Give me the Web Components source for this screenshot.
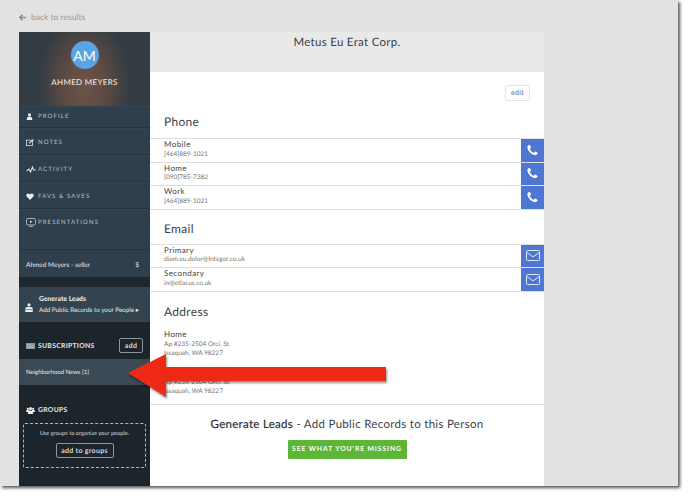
<!DOCTYPE html>
<html>
<head>
<meta charset="utf-8">
<title>Contact</title>
<style>
  html, body { margin: 0; padding: 0; background: #fff; }
  body { font-family: Lato, "Open Sans", sans-serif; text-rendering: geometricPrecision; width: 693px; height: 501px; overflow: hidden; }
</style>
</head>
<body>

<crm-page>
  <crm-sidebar slot="side"></crm-sidebar>
  <crm-main slot="main"></crm-main>
</crm-page>

<script>
const PHONE = `<svg viewBox="0 0 1792 1792" width="13" height="13"><path fill="#fff" d="M1600 1240q0 27-10 70.5t-21 68.5q-21 50-122 106-94 51-186 51-27 0-53-3.5t-57.5-12.5-47-14.5-55.5-20.5-49-18q-98-35-175-83-127-79-264-216t-216-264q-48-77-83-175-3-9-18-49t-20.5-55.5-14.5-47-12.5-57.5-3.5-53q0-92 51-186 56-101 106-122 25-11 68.5-21t70.5-10q14 0 21 3 18 6 53 76 11 19 30 54t35 63.5 31 53.5q3 4 17.5 25t21.5 35.5 7 28.5q0 20-28.5 50t-62 55-62 53-28.5 46q0 9 5 22.5t8.5 20.5 14 24 11.5 19q76 137 174 235t235 174q2 1 19 11.5t24 14 20.5 8.5 22.5 5q18 0 46-28.5t53-62 55-62 50-28.5q14 0 28.5 7t35.5 21.5 25 17.5q25 15 53.5 31t63.5 35 54 30q70 35 76 53 3 7 3 21z"/></svg>`;
const MAIL = `<svg viewBox="0 0 14 11" width="14" height="11" fill="none" stroke="#dfe6f7" stroke-width="1"><rect x=".5" y=".5" width="13" height="10" rx="1"/><path d="M.8 2.5 7 6.8l6.2-4.3"/></svg>`;

const ICONS = {
  profile: `<svg viewBox="0 0 8 8" width="7" height="7"><circle cx="4" cy="2" r="1.8" fill="#eee"/><path fill="#eee" d="M.8 8c0-3 1-4 3.2-4s3.2 1 3.2 4z"/></svg>`,
  notes: `<svg viewBox="0 0 8 7" width="8" height="7"><rect x=".4" y="1.2" width="6" height="5.4" fill="none" stroke="#ddd" stroke-width=".8"/><path d="M3 4.4 7.4.6" stroke="#eee" stroke-width="1.2"/></svg>`,
  activity: `<svg viewBox="0 0 10 7" width="10" height="7"><path d="M.5 5 3 3l1.5 3L6.5 1l1 3H10" fill="none" stroke="#ddd" stroke-width="1.1"/></svg>`,
  favs: `<svg viewBox="0 0 8 7" width="8" height="7"><path fill="#eee" d="M4 7 .6 3.4C-.6 1.6 1.8-.8 4 1.4 6.2-.8 8.6 1.6 7.4 3.4z"/></svg>`,
  pres: `<svg viewBox="0 0 10 9" width="10" height="9" fill="none" stroke="#c8ced3" stroke-width=".8"><rect x=".5" y=".5" width="9" height="6.4" rx="1.2"/><path d="M3 8.4h4"/><path d="M4 2.2 6.4 3.7 4 5.2z" fill="#c8ced3" stroke="none"/></svg>`,
  leads: `<svg viewBox="0 0 8 9" width="8" height="9"><circle cx="4" cy="1.8" r="1.6" fill="#eee"/><path fill="#eee" d="M.2 9V6.2C.2 4.6 1.4 3.8 4 3.8s3.8.8 3.8 2.4V9z"/><path d="M.2 6.600h7.600" stroke="#34424e" stroke-width=".6"/></svg>`,
  subs: `<svg viewBox="0 0 9 6" width="9" height="6"><rect width="9" height="6" fill="#8d949a"/><path d="M1 1.500h4M1 3h7M1 4.500h7" stroke="#c9cdd0" stroke-width=".5"/></svg>`,
  groups: `<svg viewBox="0 0 9 7" width="9" height="7"><g fill="#eee"><circle cx="1.800" cy="1.800" r="1.100"/><circle cx="7.200" cy="1.800" r="1.100"/><circle cx="4.500" cy="1.600" r="1.500"/><path d="M0 5c0-1.600.8-2.200 1.800-2.200s1.800.6 1.800 2.200zM5.400 5c0-1.600.8-2.200 1.800-2.200S9 3.400 9 5z"/><path d="M1.800 7c0-2.600 1-3.600 2.700-3.600S7.200 4.400 7.200 7z"/></g></svg>`
};

// one-shot helper so each class only has to hand over its markup
class ShadowBase extends HTMLElement {
  render(html) {
    if (!this.shadowRoot) this.attachShadow({ mode: 'open' });
    this.shadowRoot.innerHTML = html;
  }
}

class CrmPage extends ShadowBase {
  connectedCallback() {
    this.render(`
      <style>
        :host { display: block; width: 678px; height: 486px; position: relative; background: #e2e2e2;
                box-shadow: 2px 2px 3px #555; }
        .back { height: 32px; box-sizing: border-box; padding: 2px 0 0 19px; display: flex; align-items: center;
                gap: 5px; font-size: 8.500px; line-height: 12px; color: #9a9a9a; }
        .back span { display: block; }
        .cols { display: flex; height: 454px; margin-left: 19px; }
        .arrow { position: absolute; left: 126px; top: 352px; filter: drop-shadow(1px 2px 1px rgba(0,0,0,.45)); }
        .back svg { display: block; }
      </style>
      <div class="back">
        <svg viewBox="0 0 8 8" width="7" height="7"><path d="M4 .8 1 4l3 3.200M1.200 4H8" fill="none" stroke="#8a8a8a" stroke-width="1.700"/></svg>
        <span>back to results</span>
      </div>
      <div class="cols"><slot name="side"></slot><slot name="main"></slot></div>
      <svg class="arrow" width="262" height="46" viewBox="0 0 262 46"><path fill="#ee2a17" d="M2 21 40 2v13h220v14H40v16z"/></svg>
    `);
  }
}

class NavRow extends ShadowBase {
  connectedCallback() {
    const h = this.getAttribute('h') || 27;
    const pad = this.getAttribute('pad') || 9;
    this.render(`
      <style>
        :host { display: flex; align-items: flex-start; box-sizing: border-box; height: ${h}px;
                padding: ${pad}px 0 0 7px; background: #2f3f4c; border-bottom: 1px solid #26333e; border-top: 1px solid #354653; }
        .i { width: 11px; height: 9px; margin-right: 1px; display: flex; align-items: center; flex: none; }
        .i svg { display: block; }
        .t { font-size: 6px; line-height: 9px; letter-spacing: 1.100px; color: #b9c0c5; white-space: nowrap; }
      </style>
      <span class="i">${ICONS[this.getAttribute('icon')]}</span>
      <span class="t"><slot></slot></span>
    `);
  }
}

class OutlineBtn extends ShadowBase {
  connectedCallback() {
    this.render(`
      <style>
        :host { display: inline-flex; align-items: center; justify-content: center; box-sizing: border-box;
                border: 1px solid #8f9599; border-radius: 2px; color: #dcdcdc; font-size: 7px; font-weight: 700;
                letter-spacing: .3px; white-space: nowrap; }
      </style>
      <slot></slot>
    `);
  }
}

class CrmSidebar extends ShadowBase {
  connectedCallback() {
    this.render(`
      <style>
        :host { display: flex; flex-direction: column; width: 131px; height: 454px; flex: none; background: #1c242c; color: #eee; overflow: hidden; }
        .head { height: 74px; flex: none; display: flex; flex-direction: column; align-items: center;
                background: radial-gradient(ellipse 46px 70px at 50% 72%, #6e5448 0%, #5d4b44 45%, #333c43 100%); }
        .av { margin-top: 9px; width: 28px; height: 28px; border-radius: 50%; background: #5aa4e2; color: #fff;
              display: flex; align-items: center; justify-content: center; font-size: 14px; }
        .nm { margin-top: 8px; font-size: 8px; line-height: 10px; letter-spacing: .3px; color: #f2f2f2; }
        .seller { height: 27px; flex: none; box-sizing: border-box; padding: 3px 11px 0 7px; background: #2f3f4c;
                  display: flex; align-items: center; justify-content: space-between; font-size: 6.500px; color: #e6e9eb; }
        .gap { height: 10px; flex: none; background: #1e2831; }
        .leads { height: 35px; flex: none; box-sizing: border-box; background: #33434f; padding: 5px 0 0 6px; display: flex; align-items: center; gap: 6px; }
        .leads svg { margin-top: 1px; }
        .leads .txt { margin-top: -4px; font-size: 6.300px; line-height: 12px; color: #e6e9eb; white-space: nowrap; }
        .leads b { display: block; color: #f4f4f4; font-size: 6.800px; }
        .sec { display: flex; align-items: center; gap: 3px; margin-left: 7px; font-size: 6.800px; font-weight: 700; letter-spacing: .3px; color: #e8e8e8; }
        .subs { height: 37px; flex: none; box-sizing: border-box; padding: 16px 7px 0 0; display: flex; align-items: flex-start; justify-content: space-between; }
        .subs .sec { margin-top: 4px; }
        .add { width: 24px; height: 15px; }
        .news { height: 26px; flex: none; background: #3b4955; display: flex; align-items: center; padding-left: 7px; font-size: 6px; color: #e6e9eb; }
        .gsec { margin-top: 21px; height: 9px; line-height: 9px; }
        .dash { margin: 8px 0 0 4px; width: 123px; height: 45px; box-sizing: border-box; border: 1px dashed #b5b8bb; border-radius: 2px;
                display: flex; flex-direction: column; align-items: center; font-size: 5.700px; color: #d8dadc; padding-top: 6px; }
        .dash .add2 { margin-top: 6px; width: 58px; height: 15px; }
      </style>
      <div class="head">
        <div class="av">AM</div>
        <div class="nm">AHMED MEYERS</div>
      </div>
      <nav-row icon="profile" h="22" pad="5">PROFILE</nav-row>
      <nav-row icon="notes">NOTES</nav-row>
      <nav-row icon="activity">ACTIVITY</nav-row>
      <nav-row icon="favs">FAVS &amp; SAVES</nav-row>
      <nav-row icon="pres" h="41" pad="8">PRESENTATIONS</nav-row>
      <div class="seller"><span>Ahmed Meyers - seller</span><span>$</span></div>
      <div class="gap"></div>
      <div class="leads">${ICONS.leads}<div class="txt"><b>Generate Leads</b>Add Public Records to your People ▸</div></div>
      <div class="subs"><div class="sec">${ICONS.subs}<span>SUBSCRIPTIONS</span></div><outline-btn class="add">add</outline-btn></div>
      <div class="news">Neighborhood News [1]</div>
      <div class="sec gsec">${ICONS.groups}<span>GROUPS</span></div>
      <div class="dash"><span>Use groups to organize your people.</span><outline-btn class="add2">add to groups</outline-btn></div>
    `);
  }
}

class ContactRow extends ShadowBase {
  connectedCallback() {
    const icon = this.getAttribute('icon') === 'mail' ? MAIL : PHONE;
    this.render(`
      <style>
        :host { display: flex; height: 23.500px; box-sizing: border-box; border-bottom: 1px solid #dedede; }
        .txt { flex: 1; padding: 0 0 0 14px; }
        .l { font-size: 8px; line-height: 10.500px; letter-spacing: .4px; color: #444; }
        .v { font-size: 6.500px; line-height: 9px; color: #777; }
        .b { width: 23px; background: #4f76d3; display: flex; align-items: center; justify-content: center; }
        svg { display: block; }
      </style>
      <div class="txt"><div class="l">${this.getAttribute('label')}</div><div class="v">${this.getAttribute('value')}</div></div>
      <div class="b">${icon}</div>
    `);
  }
}

class CrmMain extends ShadowBase {
  connectedCallback() {
    this.render(`
      <style>
        :host { display: block; width: 394px; height: 454px; flex: none; background: #fff; color: #3a3f47; }
        .top { height: 40px; background: #e9e9e9; text-align: center; font-size: 11.500px; line-height: 14px; letter-spacing: .3px; padding-top: 4px; box-sizing: border-box; }
        .edit-wrap { height: 33px; display: flex; justify-content: flex-end; align-items: flex-start; padding: 13px 14px 0 0; box-sizing: border-box; }
        .edit { width: 25px; height: 16px; box-sizing: border-box; border: 1px solid #e3e3e3; border-radius: 2px; font-size: 7px; letter-spacing: .3px; color: #666;
                display: flex; align-items: center; justify-content: center; }
        h2 { margin: 0; font-weight: 400; font-size: 12px; line-height: 16px; letter-spacing: .3px; padding-left: 14px; color: #3a3f47; }
        .phone-h { height: 33px; padding-top: 9px; box-sizing: border-box; }
        .rows { border-top: 1px solid #dedede; }
        .email-h { height: 34px; padding-top: 11px; box-sizing: border-box; }
        .addr-h { height: 34px; padding-top: 12px; box-sizing: border-box; }
        .addr { height: 77px; box-sizing: border-box; padding: 0 0 0 14px; border-bottom: 1px solid #e0e0e0; }
        .addr .l { font-size: 8px; line-height: 12px; letter-spacing: .4px; color: #444; margin-top: 2px; }
        .addr .v { font-size: 6.500px; line-height: 9px; color: #777; }
        .addr .second { margin-top: 20px; }
        .cta { text-align: center; padding-top: 13px; }
        .cta .h { font-size: 11.500px; line-height: 14px; letter-spacing: .3px; }
        .cta b { font-weight: 400; color: #2c3036; -webkit-text-stroke: .2px #2c3036; }
        .go { margin: 8px auto 0; width: 119px; height: 19px; background: #5db637; color: #fff; border-radius: 1px; font-size: 6.800px; font-weight: 700; letter-spacing: .9px;
              display: flex; align-items: center; justify-content: center; }
      </style>
      <div class="top">Metus Eu Erat Corp.</div>
      <div class="edit-wrap"><div class="edit">edit</div></div>
      <h2 class="phone-h">Phone</h2>
      <div class="rows">
        <contact-row label="Mobile" value="[464]889-1021"></contact-row>
        <contact-row label="Home" value="[090]785-7382"></contact-row>
        <contact-row label="Work" value="[464]889-1021"></contact-row>
      </div>
      <h2 class="email-h">Email</h2>
      <div class="rows">
        <contact-row icon="mail" label="Primary" value="diam.eu.dolor@Integer.co.uk"></contact-row>
        <contact-row icon="mail" label="Secondary" value="in@etlacus.co.uk"></contact-row>
      </div>
      <h2 class="addr-h">Address</h2>
      <div class="addr">
        <div class="l">Home</div>
        <div class="v">Ap #235-2504 Orci. St.</div>
        <div class="v">Issaquah, WA 98227</div>
        <div class="v second">Ap #235-2504 Orci. St.</div>
        <div class="v">Issaquah, WA 98227</div>
      </div>
      <div class="cta">
        <div class="h"><b>Generate Leads</b> - Add Public Records to this Person</div>
        <div class="go">SEE WHAT YOU'RE MISSING</div>
      </div>
    `);
  }
}

customElements.define('outline-btn', OutlineBtn);
customElements.define('nav-row', NavRow);
customElements.define('contact-row', ContactRow);
customElements.define('crm-sidebar', CrmSidebar);
customElements.define('crm-main', CrmMain);
customElements.define('crm-page', CrmPage);
</script>
</body>
</html>
